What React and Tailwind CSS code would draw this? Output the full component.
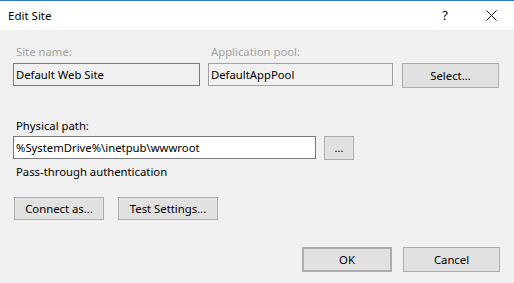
export default function App() {
  const btn =
    'flex items-center justify-center bg-[#e1e1e1] border border-[#adadad] text-black';

  return (
    <div
      className="w-[514px] h-[283px] bg-[#f0f0f0] border-t border-[#2b79c2] text-black overflow-hidden"
      style={{ fontFamily: '"Noto Sans", "Open Sans", sans-serif' }}
    >
      {/* title bar */}
      <div className="h-[29px] bg-white flex items-center">
        <div className="pl-2 text-[11.5px] flex-1">Edit Site</div>
        <div className="w-[46px] h-full flex items-center justify-center text-[13px]">?</div>
        <div className="w-[46px] h-full flex items-center justify-center">
          <svg width="11" height="11" viewBox="0 0 11 11">
            <path d="M0.5 0.5 L10.5 10.5 M10.5 0.5 L0.5 10.5" stroke="#111" strokeWidth="1" />
          </svg>
        </div>
      </div>

      {/* body */}
      <div className="px-[13px] pt-[14px] text-[11.3px] leading-4">
        <div className="flex items-end">
          <div className="w-[187px]">
            <div className="pl-[3px] text-[#a3a3a3]">Site name:</div>
            <div className="mt-[3px] h-[23px] border border-[#4a86b8] bg-[#f0f0f0] flex items-center pl-[2px]">
              Default Web Site
            </div>
          </div>
          <div className="w-[185px] ml-[8px]">
            <div className="pl-[3px] text-[#a3a3a3]">Application pool:</div>
            <div className="mt-[3px] h-[23px] border border-[#a0a0a0] bg-[#f0f0f0] flex items-center pl-[2px]">
              DefaultAppPool
            </div>
          </div>
          <div className={`${btn} w-[97px] h-[25px] ml-[9px] -mb-[2px]`}>Select...</div>
        </div>

        <div className="mt-[32px] pl-[3px]">Physical path:</div>
        <div className="mt-[2px] flex items-start">
          <div className="w-[303px] h-[23px] border border-[#7a7a7a] bg-white flex items-center pl-[2px]">
            %SystemDrive%\inetpub\wwwroot
          </div>
          <div className={`${btn} w-[30px] h-[24px] ml-[8px]`}>...</div>
        </div>
        <div className="mt-[4px] pl-[3px]">Pass-through authentication</div>

        <div className="mt-[17px] flex gap-[14px] pl-[1px]">
          <div className={`${btn} w-[90px] h-[23px]`}>Connect as...</div>
          <div className={`${btn} w-[100px] h-[23px]`}>Test Settings...</div>
        </div>

        <div className="mt-[27px] flex justify-end gap-[11px] pr-[1px]">
          <div className={`${btn} w-[90px] h-[25px] border-2 border-[#0078d7]`}>OK</div>
          <div className={`${btn} w-[97px] h-[25px]`}>Cancel</div>
        </div>
      </div>
    </div>
  );
}
